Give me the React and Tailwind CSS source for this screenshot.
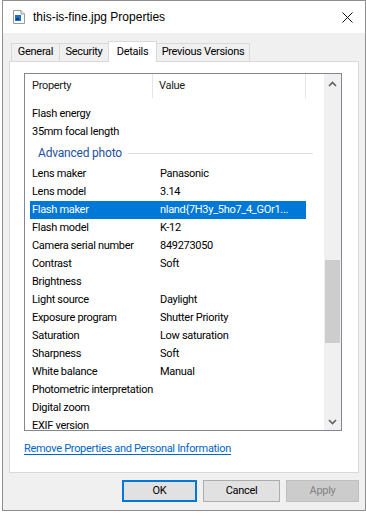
import React from 'react';

const rows = [
  ['Flash energy', ''],
  ['35mm focal length', ''],
  { group: 'Advanced photo' },
  ['Lens maker', 'Panasonic'],
  ['Lens model', '3.14'],
  ['Flash maker', 'nland{7H3y_5ho7_4_GOr1...', true],
  ['Flash model', 'K-12'],
  ['Camera serial number', '849273050'],
  ['Contrast', 'Soft'],
  ['Brightness', ''],
  ['Light source', 'Daylight'],
  ['Exposure program', 'Shutter Priority'],
  ['Saturation', 'Low saturation'],
  ['Sharpness', 'Soft'],
  ['White balance', 'Manual'],
  ['Photometric interpretation', ''],
  ['Digital zoom', ''],
  ['EXIF version', ''],
];

const tabs = [
  ['General', 'w-[49px]'],
  ['Security', 'w-[50px]'],
  ['Details', 'w-[49px]'],
  ['Previous Versions', 'w-[94px]'],
];

function FileIcon() {
  return (
    <svg width="12" height="14" viewBox="0 0 12 14">
      <path d="M0.5 0.5 H8 L11.5 4 V13.5 H0.5 Z" fill="#fff" stroke="#9a9a9a" />
      <path d="M8 0.5 V4 H11.5" fill="#e8e8e8" stroke="#9a9a9a" />
      <rect x="2" y="5" width="6" height="6" fill="#1f6fc5" />
      <rect x="3" y="8" width="3" height="2" fill="#0d3d7a" />
    </svg>
  );
}

function Chevron({ down }) {
  return (
    <svg width="9" height="6" viewBox="0 0 9 6">
      <path d={down ? 'M1 1 L4.5 4.5 L8 1' : 'M1 5 L4.5 1.5 L8 5'} fill="none" stroke="#606060" strokeWidth="1.6" />
    </svg>
  );
}

export default function App() {
  return (
    <div className="w-[366px] h-[516px] bg-white text-[11px] tracking-[-0.3px] text-black font-['Roboto','Liberation_Sans',Arial,sans-serif] overflow-hidden">
      <div className="ml-[2px] w-[364px] h-[511px] border border-[#8e8e8e] bg-[#f0f0f0] flex flex-col">
        {/* title bar */}
        <div className="h-[32px] bg-white flex items-center shrink-0">
          <div className="ml-[10px] w-[12px] flex"><FileIcon /></div>
          <span className="ml-[8px] text-[12px] tracking-normal font-['Liberation_Sans',Arial,sans-serif]">this-is-fine.jpg Properties</span>
          <div className="ml-auto mr-[12px]">
            <svg width="11" height="11" viewBox="0 0 11 11">
              <path d="M0.5 0.5 L10.5 10.5 M10.5 0.5 L0.5 10.5" stroke="#111" strokeWidth="1" />
            </svg>
          </div>
        </div>

        {/* tabs */}
        <div className="flex items-end h-[28px] pl-[8px] shrink-0">
          {tabs.map(([t, w]) => (
            t === 'Details' ? (
              <div key={t} className={`${w} h-[21px] -mb-px relative z-10 bg-white border border-b-0 border-[#d9d9d9] flex items-center justify-center -ml-px`}>
                {t}
              </div>
            ) : (
              <div key={t} className={`${w} h-[18px] bg-[#f0f0f0] border border-b-0 border-[#d9d9d9] flex items-center justify-center -ml-px first:ml-0`}>
                {t}
              </div>
            )
          ))}
        </div>

        {/* panel */}
        <div className="mx-[6px] h-[412px] bg-white border border-[#d9d9d9] shrink-0 pt-[11px] pl-[14px]">
          <div className="w-[318px] h-[358px] border border-[#828790] flex">
            <div className="flex-1 flex flex-col overflow-hidden">
              {/* header */}
              <div className="h-[24px] flex shrink-0 text-[#1a1a1a]">
                <div className="w-[128px] pl-[7px] flex items-center border-r border-[#e5e5e5]">Property</div>
                <div className="w-[153px] pl-[6px] flex items-center border-r border-[#e5e5e5]">Value</div>
              </div>
              <div className="h-[7px] shrink-0" />
              {rows.map((r, i) =>
                r.group ? (
                  <div key={i} className="h-[24px] shrink-0 flex items-center pl-[13px] pr-[11px]">
                    <span className="text-[#1e50a0] text-[12px] tracking-[-0.2px]">{r.group}</span>
                    <div className="ml-[6px] flex-1 h-px bg-[#e2e2e2]" />
                  </div>
                ) : (
                  <div key={i} className={`h-[18px] shrink-0 ml-[5px] w-[276px] flex items-center ${r[2] ? 'bg-[#0078d7] text-white' : ''}`}>
                    <div className="w-[128px] pl-[2px] whitespace-nowrap">{r[0]}</div>
                    <div className="pl-[2px] whitespace-nowrap">{r[1]}</div>
                  </div>
                )
              )}
            </div>
            {/* scrollbar */}
            <div className="w-[17px] bg-[#f0f0f0] flex flex-col shrink-0">
              <div className="h-[17px] flex items-center justify-center pt-[3px]"><Chevron /></div>
              <div className="h-[169px]" />
              <div className="h-[83px] mx-[1px] bg-[#cdcdcd]" />
              <div className="flex-1" />
              <div className="h-[17px] flex items-center justify-center"><Chevron down /></div>
            </div>
          </div>
          <div className="mt-[10px] text-[#0066cc] underline underline-offset-2">
            Remove Properties and Personal Information
          </div>
        </div>

        {/* buttons */}
        <div className="flex justify-end gap-[6px] pr-[6px] pt-[7px]">
          <div className="w-[75px] h-[22px] bg-[#e1e1e1] border-2 border-[#0078d7] flex items-center justify-center">OK</div>
          <div className="w-[77px] h-[22px] bg-[#e1e1e1] border border-[#adadad] flex items-center justify-center">Cancel</div>
          <div className="w-[73px] h-[22px] bg-[#cccccc] border border-[#bfbfbf] text-[#838383] flex items-center justify-center">Apply</div>
        </div>
      </div>
    </div>
  );
}
